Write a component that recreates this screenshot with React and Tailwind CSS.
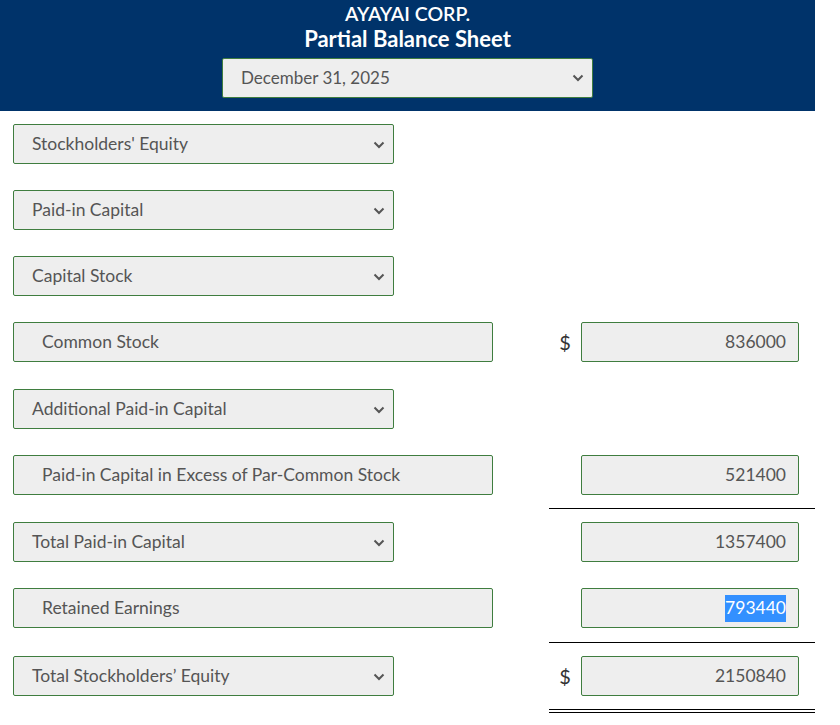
import React from "react";

const Chevron = () => (
  <svg width="12" height="8" viewBox="0 0 12 8" className="shrink-0">
    <path d="M1.5 1.5 L6 6 L10.5 1.5" fill="none" stroke="#555" strokeWidth="2" />
  </svg>
);

// a select-looking box with chevron on the right
const SelectBox = ({ label, width = "w-[381px]" }) => (
  <div
    className={`${width} h-[40px] flex items-center justify-between pl-[18px] pr-[8px] pt-[1px] bg-[#eeeeee] border border-[#3f7d3f] rounded-[2px] text-[17.5px] text-[#555]`}
  >
    <span>{label}</span>
    <Chevron />
  </div>
);

// plain text input (indented label)
const TextBox = ({ label }) => (
  <div className="w-[480px] h-[40px] flex items-center pl-[28px] pt-[1px] bg-[#eeeeee] border border-[#3f7d3f] rounded-[2px] text-[17.5px] text-[#555]">
    {label}
  </div>
);

const Amount = ({ value, selected }) => (
  <div className="w-[218px] h-[40px] flex items-center justify-end pr-[12px] pt-[1px] bg-[#eeeeee] border border-[#3f7d3f] rounded-[2px] text-[17.5px] text-[#555]">
    {selected ? <span className="bg-[#3390ff] text-white">{value}</span> : value}
  </div>
);

const rows = [
  { kind: "select", label: "Stockholders' Equity" },
  { kind: "select", label: "Paid-in Capital" },
  { kind: "select", label: "Capital Stock" },
  { kind: "text", label: "Common Stock", dollar: true, value: "836000", extra: true },
  { kind: "select", label: "Additional Paid-in Capital" },
  { kind: "text", label: "Paid-in Capital in Excess of Par-Common Stock", value: "521400", line: "single" },
  { kind: "select", label: "Total Paid-in Capital", value: "1357400" },
  { kind: "text", label: "Retained Earnings", value: "793440", selected: true, line: "single", extra: true },
  { kind: "select", label: "Total Stockholders’ Equity", dollar: true, value: "2150840", line: "double" },
];

export default function App() {
  return (
    <div className="w-[840px] min-h-[725px] bg-white" style={{ fontFamily: "Lato, 'Open Sans', sans-serif" }}>
      <div className="w-[815px]">
        <div className="bg-[#00336a] pt-[2px] pb-[13px] flex flex-col items-center text-white">
          <div className="text-[19.5px] font-semibold leading-[24px]">AYAYAI CORP.</div>
          <div className="text-[22px] font-bold leading-[25px]">Partial Balance Sheet</div>
          <div className="mt-[7px] w-[371px] h-[40px] flex items-center justify-between pl-[18px] pr-[8px] bg-[#eeeeee] border border-[#3f7d3f] rounded-[2px] text-[17px] text-[#555]">
            <span>December 31, 2025</span>
            <Chevron />
          </div>
        </div>

        {rows.map((r, i) => (
          <div key={i} className="flex">
            <div className={`w-[549px] pl-[13px] pt-[13px] ${r.extra ? "pb-[14px]" : "pb-[13px]"}`}>
              {r.kind === "select" ? <SelectBox label={r.label} /> : <TextBox label={r.label} />}
            </div>
            <div
              className={`w-[266px] pt-[13px] ${r.extra ? "pb-[14px]" : "pb-[13px]"} flex items-start ${
                r.line === "single"
                  ? "border-b border-black"
                  : r.line === "double"
                  ? "border-b-[4px] border-double border-black"
                  : ""
              }`}
            >
              {r.value && (
                <>
                  <span className="w-[32px] h-[40px] flex items-center justify-center text-[20px] text-[#333]">
                    {r.dollar ? "$" : ""}
                  </span>
                  <Amount value={r.value} selected={r.selected} />
                </>
              )}
            </div>
          </div>
        ))}
      </div>
    </div>
  );
}
